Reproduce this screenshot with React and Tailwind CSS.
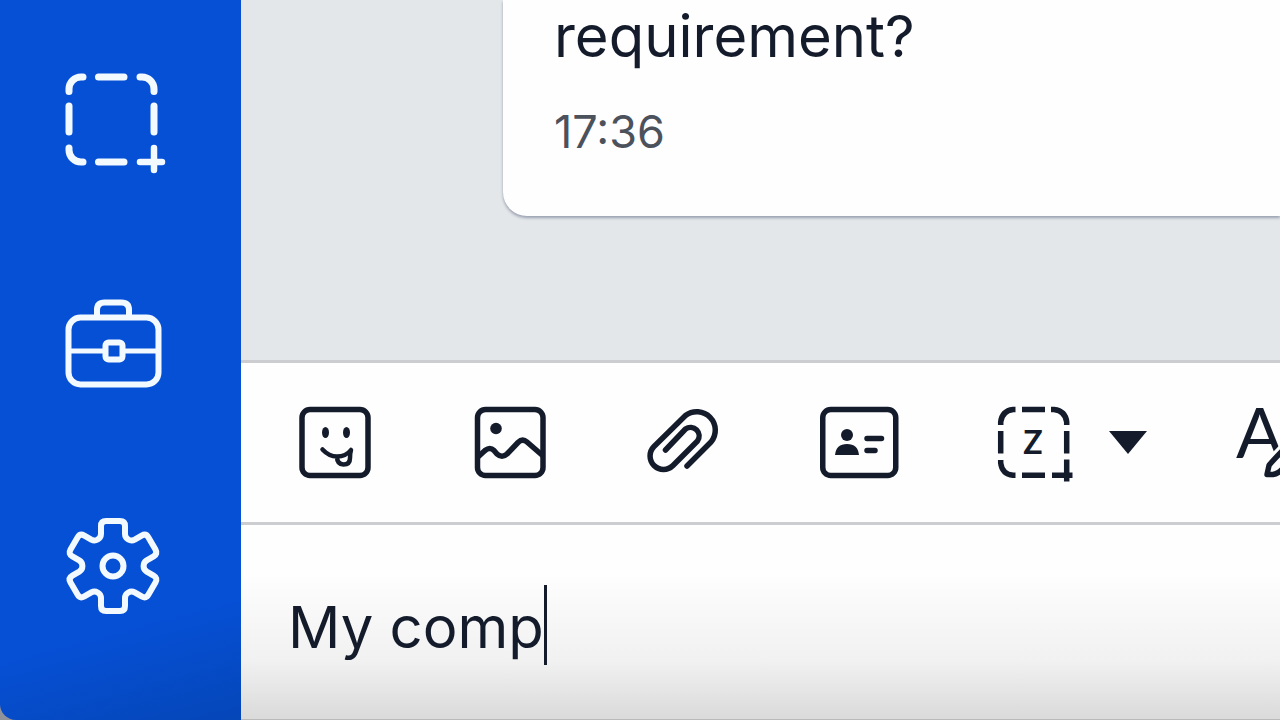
import React, { useState } from "react";

// One tooth of the settings gear, repeated every 60 degrees around the hub
const gearPath = () => {
  const turn = (x, y, deg) => {
    const a = (deg * Math.PI) / 180;
    const px = 57 + x * Math.cos(a) - y * Math.sin(a);
    const py = 56 + x * Math.sin(a) + y * Math.cos(a);
    return `${px.toFixed(2)} ${py.toFixed(2)}`;
  };
  let d = `M${turn(-12, -32, 0)}`;
  for (let deg = 0; deg < 360; deg += 60) {
    d += `L${turn(-12, -40, deg)}Q${turn(-12, -45, deg)} ${turn(-7, -45, deg)}`;
    d += `L${turn(7, -45, deg)}Q${turn(12, -45, deg)} ${turn(12, -40, deg)}`;
    d += `L${turn(12, -32, deg)}A6.6 6.6 0 0 0 ${turn(-12, -32, deg + 60)}`;
  }
  return `${d}Z`;
};

const NavButton = ({ label, children }) => (
  <button type="button" aria-label={label} className="size-28 text-[#f2faff]">
    <svg
      viewBox="0 0 112 112"
      className="size-28"
      fill="none"
      stroke="currentColor"
      strokeWidth="6"
      strokeLinecap="round"
      strokeLinejoin="round"
    >
      {children}
    </svg>
  </button>
);

const ToolButton = ({ label, children }) => (
  <button type="button" aria-label={label} className="size-20 shrink-0">
    <svg
      viewBox="0 0 80 80"
      className="size-20"
      fill="none"
      stroke="currentColor"
      strokeWidth="5.5"
      strokeLinecap="round"
      strokeLinejoin="round"
    >
      {children}
    </svg>
  </button>
);

const Sidebar = () => (
  <nav className="flex w-[241px] shrink-0 flex-col gap-[111px] rounded-bl-2xl bg-[linear-gradient(165deg,#0650d6_84%,#0546b8_100%)] pt-16 pl-14">
    <NavButton label="Screenshot">
      <g strokeWidth="7">
        <path d="M13 27.5V25a12 12 0 0 1 12-12h2M84 13h2a12 12 0 0 1 12 12v2.5M13 84v2a12 12 0 0 0 12 12h2" />
        <path d="M42.5 13H68M13 42v26M98 42v26M42.5 98H68" />
      </g>
      <path d="M84 98h22M98 84v22" strokeWidth="6.5" />
    </NavButton>
    <NavButton label="Toolbox">
      <rect x="12.5" y="30.5" width="90" height="67" rx="12" />
      <path d="M41 30v-7q0-7.5 7.5-7.5h17q7.5 0 7.5 7.5v7" />
      <path d="M13 64h36M67 64h35" strokeWidth="5" />
      <rect x="49.5" y="55.5" width="17" height="17" rx="3" />
    </NavButton>
    <NavButton label="Settings">
      <path d={gearPath()} />
      <circle cx="57" cy="56" r="10.5" />
    </NavButton>
  </nav>
);

const Toolbar = () => (
  <div className="flex shrink-0 gap-[95px] overflow-hidden border-y-3 border-[#cbcdd0] bg-[#fefeff] pt-10 pb-[39px] pl-[54px]">
    <ToolButton label="Stickers">
      <rect x="7" y="6.5" width="66" height="66" rx="8" />
      <g fill="currentColor" stroke="none">
        <ellipse cx="30.5" cy="29.5" rx="3.5" ry="5.5" />
        <ellipse cx="51.5" cy="29.5" rx="3.5" ry="5.5" />
      </g>
      <path
        d="M27.5 46.5Q34 53.5 42 53.5Q51 53.5 56 47Q55 50 55 55Q55 61.5 48.5 61.500Q42 61 42 54"
        strokeWidth="4.5"
      />
    </ToolButton>
    <ToolButton label="Send image">
      <rect x="7.5" y="6.5" width="65.5" height="66" rx="8" />
      <circle cx="26" cy="25.5" r="5.8" fill="currentColor" stroke="none" />
      <path d="M9 53L15 47.5Q20 43.5 24 47.5L27 51Q32 55.5 37 51L48 39.5Q52.5 35 57 39L72 52" />
    </ToolButton>
    <ToolButton label="Attach file">
      <path d="M42 63L66 39A18.5 18.5 0 0 0 40.5 12.5L9 43.5A13.4 13.4 0 0 0 28 62.5L52.5 38A8.6 8.6 0 0 0 40.5 26L20.5 47" />
    </ToolButton>
    <ToolButton label="Send name card">
      <rect x="2.75" y="6.5" width="73" height="66" rx="8" />
      <g fill="currentColor" stroke="none">
        <circle cx="27" cy="32" r="6" />
        <path d="M15 52Q16 41 27 41Q38 41 39 52Z" />
      </g>
      <path d="M47 35.5H61.5M47 47.5H55" />
    </ToolButton>
    <div className="flex shrink-0 gap-20">
      <div className="flex items-center gap-[34px]">
        <ToolButton label="Capture screen">
          <g strokeLinecap="butt">
            <path d="M5.7 22V19Q7 8 18 6.5H20.5M56 6.5H59Q70.5 8 71.7 19V22M5.7 57V60Q7 71 18 72.3H20.5" />
            <path d="M27 6.5H50M5.7 28V50.5M71.7 28V50.5M27 72.3H50" />
            <path d="M57 72.3H77.5M71.7 56.5V78.5" />
          </g>
          <text
            x="38"
            y="50.5"
            textAnchor="middle"
            className="fill-current stroke-none font-['Lato'] text-[32px] font-bold"
          >
            Z
          </text>
        </ToolButton>
        <button type="button" aria-label="Capture options">
          <svg viewBox="0 0 38 24" className="h-6 w-[38px]" fill="currentColor">
            <path d="M0 0H38L19 23Z" />
          </svg>
        </button>
      </div>
      <ToolButton label="Format message">
        <text
          x="9"
          y="55"
          className="fill-current stroke-none font-['Lato'] text-[70px]"
        >
          A
        </text>
        {/* pale stroke first, so the pen cuts into the letter's leg */}
        <path
          d="M40 71.5L42 62.5Q43 60.5 62 41L72 52L52 69Q49 71 46 71.5Z"
          stroke="#fefeff"
          strokeWidth="12"
        />
        <path d="M40 71.5L42 62.5Q43 60.5 62 41L72 52L52 69Q49 71 46 71.5Z" />
      </ToolButton>
    </div>
  </div>
);

const Composer = () => {
  const [draft, setDraft] = useState("My comp");

  return (
    <div className="flex shrink-0 items-center border-b border-[#b9b9b9] bg-linear-to-b from-[#fefefe] from-25% via-[#f1f1f1] via-70% to-[#dadada] pt-[60px] pb-[54px] pl-[47px]">
      <input
        type="text"
        aria-label="Message"
        value={draft}
        onChange={(e) => setDraft(e.target.value)}
        className="field-sizing-content h-20 bg-transparent pt-1 text-[58px] caret-transparent outline-none"
      />
      <span className="h-20 w-[3px] bg-[#141c2c]" />
    </div>
  );
};

export default function App() {
  return (
    <div className="flex min-h-screen overflow-hidden bg-[#8f9299] font-['Inter',sans-serif] text-[#141c2c]">
      <Sidebar />
      <main className="flex min-w-0 flex-1 flex-col">
        <section className="flex flex-1 flex-col bg-[#e3e7ea] pb-36 pl-[262px]">
          <article className="flex-1 rounded-bl-3xl bg-[#fefeff] pb-10 pl-[51px] shadow-[0_2px_3px_#9aa0b0]">
            <p className="text-[58px] leading-[72px]">requirement?</p>
            <time className="mt-5 block text-[45px] leading-[80px] text-[#4c525c]">
              17:36
            </time>
          </article>
        </section>
        <Toolbar />
        <Composer />
      </main>
    </div>
  );
}
